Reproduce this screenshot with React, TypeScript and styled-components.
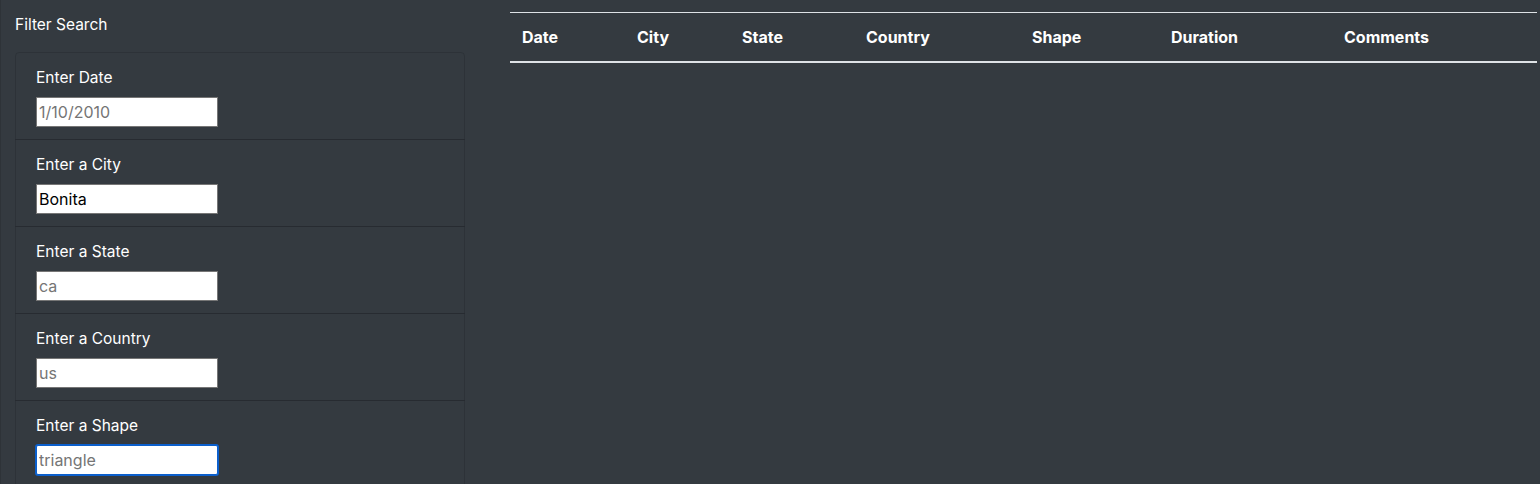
import React from "react";
import styled, { createGlobalStyle, css } from "styled-components";

const GlobalStyle = createGlobalStyle`
  html, body {
    margin: 0;
    padding: 0;
    background-color: #343a40;
    color: #fff;
    font-family: Inter, "Liberation Sans", sans-serif;
  }
`;

interface FilterField {
  id: string;
  label: string;
  placeholder: string;
  value?: string;
  focused?: boolean;
}

const fields: FilterField[] = [
  { id: "datetime", label: "Enter Date", placeholder: "1/10/2010" },
  { id: "city", label: "Enter a City", placeholder: "roswell", value: "Bonita" },
  { id: "state", label: "Enter a State", placeholder: "ca" },
  { id: "country", label: "Enter a Country", placeholder: "us" },
  { id: "shape", label: "Enter a Shape", placeholder: "triangle", focused: true },
];

const columns = [
  { title: "Date", width: 115 },
  { title: "City", width: 105 },
  { title: "State", width: 124 },
  { title: "Country", width: 166 },
  { title: "Shape", width: 139 },
  { title: "Duration", width: 173 },
  { title: "Comments", width: 205 },
];

export default function App() {
  return (
    <>
      <GlobalStyle />
      <Page>
        <Sidebar>
          <Heading>Filter Search</Heading>
          <FilterList>
            {fields.map((f) => (
              <FilterItem key={f.id}>
                <Label htmlFor={f.id}>{f.label}</Label>
                <TextInput
                  id={f.id}
                  type="text"
                  placeholder={f.placeholder}
                  defaultValue={f.value}
                  $focused={f.focused}
                  autoFocus={f.focused}
                />
              </FilterItem>
            ))}
          </FilterList>
        </Sidebar>
        <Main>
          <Table>
            <thead>
              <tr>
                {columns.map((c) => (
                  <HeadCell key={c.title} style={{ width: c.width }}>
                    {c.title}
                  </HeadCell>
                ))}
              </tr>
            </thead>
            <tbody></tbody>
          </Table>
        </Main>
      </Page>
    </>
  );
}

const Page = styled.div`
  display: flex;
  flex-direction: row;
  width: 1540px;
  min-height: 484px;
  box-sizing: border-box;
  border-left: 1px solid #2e3338;
`;

const Sidebar = styled.div`
  width: 479px;
  flex-shrink: 0;
  box-sizing: border-box;
  padding: 12px 15px 0 14px;
`;

const Heading = styled.div`
  font-size: 15.5px;
  line-height: 24px;
  padding-top: 1px;
  margin-bottom: 15px;
  color: #fff;
`;

const FilterList = styled.ul`
  list-style: none;
  margin: 0;
  padding: 0;
  border-radius: 4px;
`;

const FilterItem = styled.li`
  display: flex;
  flex-direction: column;
  align-items: flex-start;
  padding: 12px 20px;
  border: 1px solid rgba(0, 0, 0, 0.125);
  margin-bottom: -1px;
  &:first-child {
    border-top-left-radius: 4px;
    border-top-right-radius: 4px;
  }
`;

const Label = styled.label`
  font-size: 15.5px;
  line-height: 24px;
  padding-top: 1px;
  margin-bottom: 7px;
  color: #fff;
`;

const TextInput = styled.input<{ $focused?: boolean }>`
  width: 182px;
  height: 30px;
  box-sizing: border-box;
  padding: 1px 2px;
  border: 1px solid #767676;
  background: #fff;
  color: #000;
  font-family: Inter, "Liberation Sans", sans-serif;
  font-size: 16px;
  outline: none;
  &::placeholder {
    color: #757575;
  }
  ${(p) =>
    p.$focused &&
    css`
      border-color: #0b5fcc;
      border-radius: 2px;
      box-shadow: 0 0 0 1px #0b5fcc;
    `}
`;

const Main = styled.div`
  flex: 1;
  padding: 12px 3px 0 30px;
`;

const Table = styled.table`
  width: 1027px;
  border-collapse: collapse;
  border-top: 1px solid #dee2e6;
`;

const HeadCell = styled.th`
  box-sizing: border-box;
  text-align: left;
  padding: 12px;
  font-size: 16px;
  font-weight: 700;
  line-height: 24px;
  color: #fff;
  border-bottom: 2px solid #dee2e6;
  vertical-align: bottom;
`;
